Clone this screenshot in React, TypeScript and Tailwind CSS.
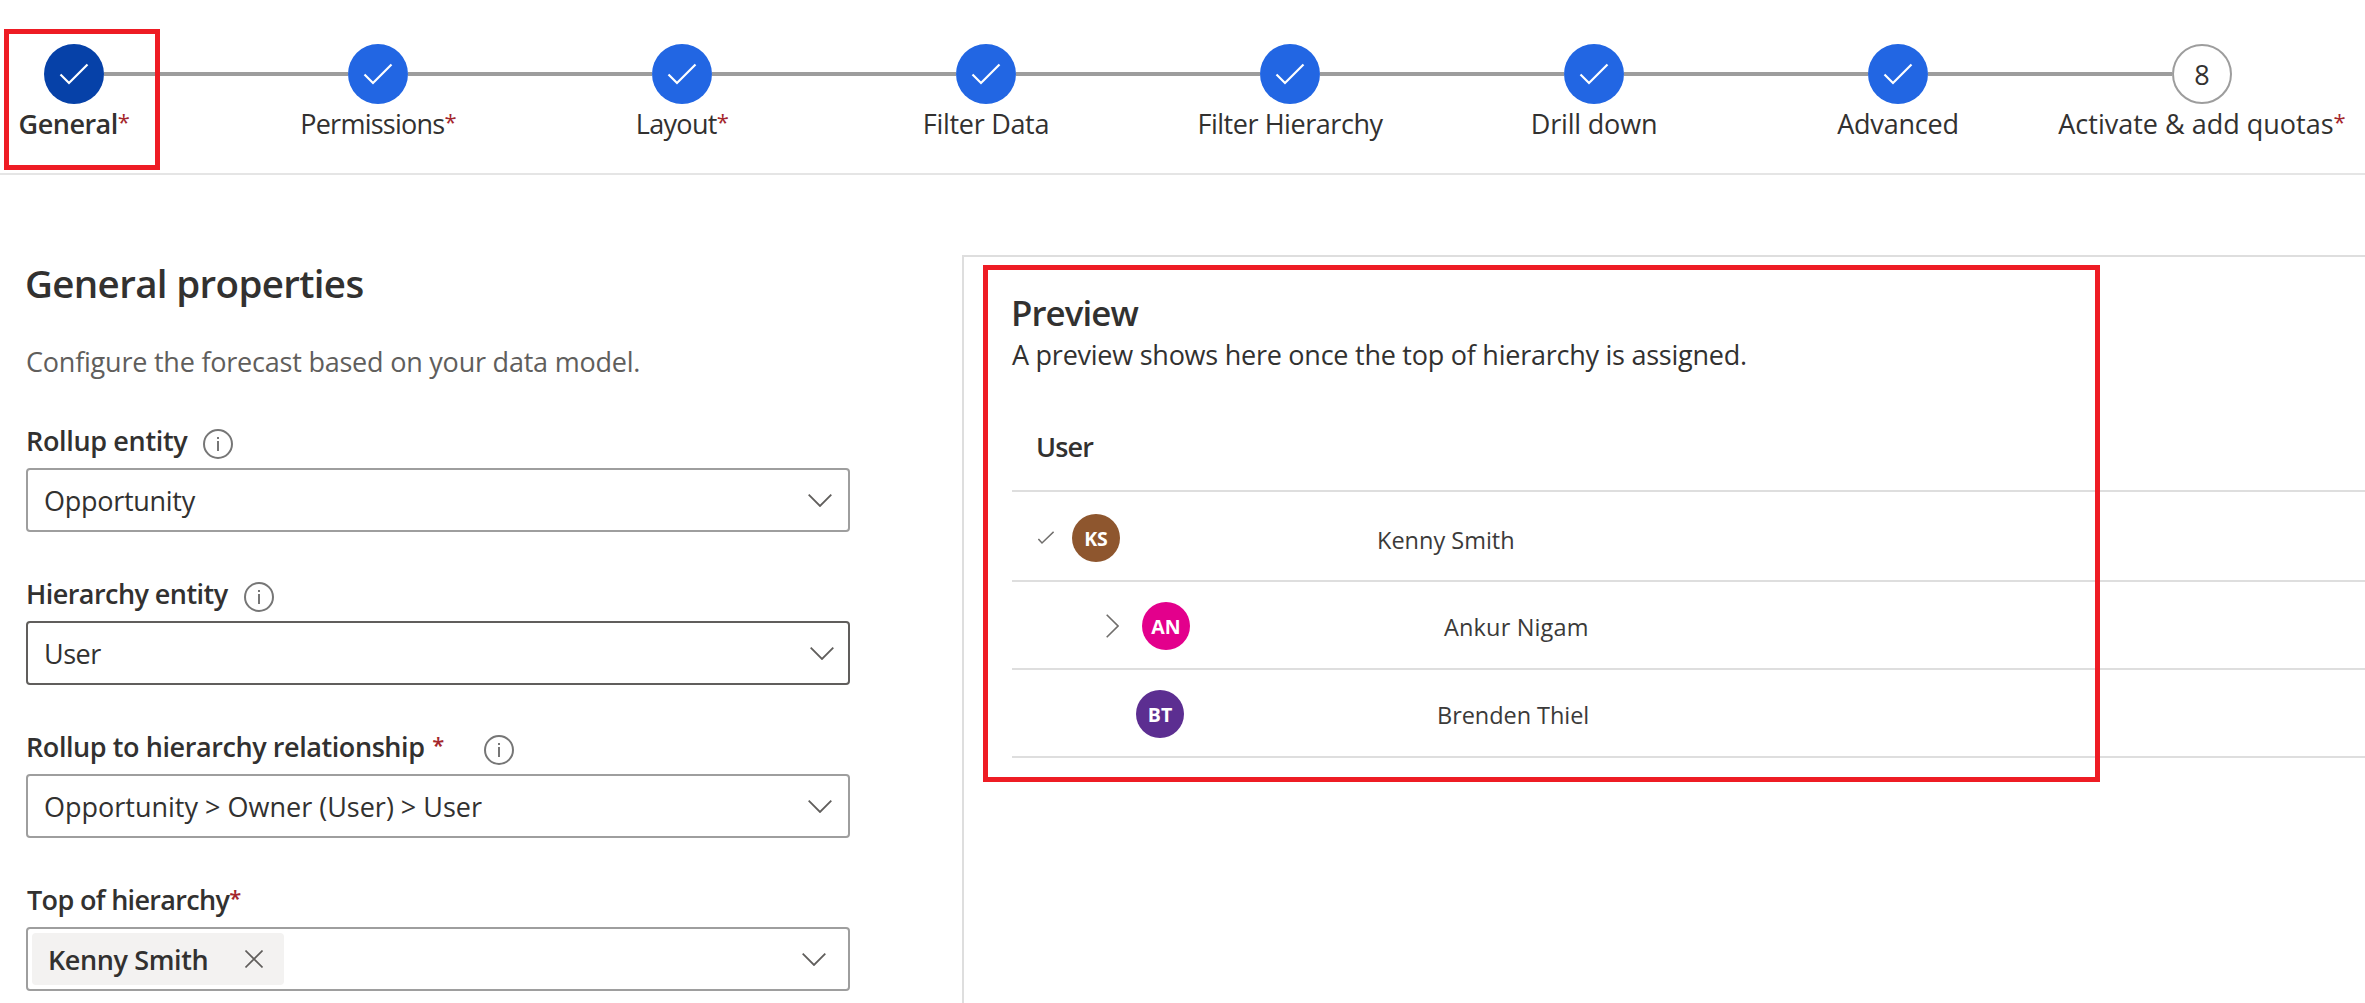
import type { ReactNode } from "react";

const regular = "text-[27px]";
const semibold = "text-[27px] font-semibold";

type Step = { label: string; required?: boolean; spacing: string };

const steps: Step[] = [
  { label: "General", required: true, spacing: "tracking-[-0.5px]" },
  { label: "Permissions", required: true, spacing: "tracking-[-0.75px]" },
  { label: "Layout", required: true, spacing: "tracking-[-0.65px]" },
  { label: "Filter Data", spacing: "tracking-[-0.3px]" },
  { label: "Filter Hierarchy", spacing: "tracking-[-0.45px]" },
  { label: "Drill down", spacing: "tracking-[-0.18px]" },
  { label: "Advanced", spacing: "tracking-[-0.2px]" },
  { label: "Activate & add quotas", required: true, spacing: "" },
];

function Required({ className = "" }: { className?: string }) {
  return <span className={`align-[4px] text-[22px] leading-none text-[#a4262c] ${className}`}>*</span>;
}

function Stepper() {
  return (
    <header className="relative h-[175px] overflow-hidden border-b-2 border-[#e5e5e5] pt-11">
      <div className="-ml-[78px] flex">
        {steps.map((step, i) => {
          const last = i === steps.length - 1;
          return (
            <div key={step.label} className="w-[304px] shrink-0">
              <div className="flex h-[60px] items-center">
                <div className={`h-1 flex-1 ${i === 0 ? "" : "bg-[#9d9d9d]"}`} />
                {last ? (
                  <div className="flex size-[60px] items-center justify-center rounded-full border-2 border-[#9d9d9d] pt-[3px] text-[27px]">
                    8
                  </div>
                ) : (
                  <div className={`size-[60px] rounded-full ${i === 0 ? "bg-[#0641a8]" : "bg-[#2266e3]"}`}>
                    <svg viewBox="0 0 60 60" className="size-full" fill="none" stroke="white" strokeWidth="2.2">
                      <path d="M16.5 30.5 25 39 43.5 20.5" />
                    </svg>
                  </div>
                )}
                <div className={`h-1 flex-1 ${last ? "" : "bg-[#9d9d9d]"}`} />
              </div>
              <div
                className={`text-center leading-10 whitespace-nowrap ${i === 0 ? semibold : regular} ${step.spacing}`}
              >
                {step.label}
                {step.required && <Required className="font-normal" />}
              </div>
            </div>
          );
        })}
      </div>
      <div className="absolute top-[29px] left-1 h-[141px] w-[156px] border-[5px] border-[#ee1c24]" />
    </header>
  );
}

function InfoIcon({ className }: { className: string }) {
  return (
    <svg
      viewBox="0 0 30 30"
      className={`mt-2 size-[30px] shrink-0 ${className}`}
      fill="none"
      stroke="#767676"
      strokeWidth="2"
    >
      <circle cx="15" cy="15" r="14" />
      <path d="M15 12v10M15 8v2" />
    </svg>
  );
}

function Field({
  label,
  info,
  border = "border-[#9e9e9e]",
  chevron,
  children,
}: {
  label: ReactNode;
  info?: string;
  border?: string;
  chevron: string;
  children: ReactNode;
}) {
  return (
    <div>
      <div className={`flex h-12 items-start pt-px leading-10 whitespace-nowrap ${semibold}`}>
        {label}
        {info && <InfoIcon className={info} />}
      </div>
      <div className={`flex h-16 items-center rounded-[4px] border-2 ${border}`}>
        {children}
        <svg
          viewBox="0 0 24 13"
          className={`ml-auto h-[13px] w-6 ${chevron}`}
          fill="none"
          stroke="#605e5c"
          strokeWidth="1.8"
        >
          <path d="M.7.7 12 12 23.3.7" />
        </svg>
      </div>
    </div>
  );
}

function Row({
  className,
  icon,
  avatar,
  initials,
  name,
  nameClass,
}: {
  className: string;
  icon?: ReactNode;
  avatar: string;
  initials: string;
  name: string;
  nameClass: string;
}) {
  return (
    <div className={`flex border-b-2 border-[#dedede] ${className}`}>
      {icon}
      <div
        className={`flex size-12 shrink-0 items-center justify-center rounded-full pt-0.5 text-[19.5px] font-bold text-white ${avatar}`}
      >
        {initials}
      </div>
      <div className={`text-[23.5px] leading-[48px] whitespace-nowrap text-[#3b3a39] ${nameClass}`}>{name}</div>
    </div>
  );
}

export default function App() {
  return (
    <div className="flex h-[1003px] w-[2365px] flex-col overflow-hidden bg-white font-['Open_Sans','Noto_Sans',sans-serif] text-[#323130]">
      <Stepper />
      <main className="flex flex-1">
        <section className="w-[962px] shrink-0 pt-[82px] pr-28 pl-[26px]">
          <h1 className="-ml-px text-[38.5px] leading-[53px] font-semibold tracking-[-0.65px]">
            General properties
          </h1>
          <p className={`mt-8 leading-10 tracking-[-0.22px] text-[#605e5c] ${regular}`}>
            Configure the forecast based on your data model.
          </p>
          <div className="mt-[38px] flex flex-col gap-[41px]">
            <Field
              label={<span className="tracking-[-0.34px]">Rollup entity</span>}
              info="ml-4"
              chevron="mr-4"
            >
              <span className={`pt-0.5 pl-4 tracking-[-0.28px] ${regular}`}>Opportunity</span>
            </Field>
            <Field
              label={<span className="tracking-[-0.55px]">Hierarchy entity</span>}
              info="ml-4"
              border="border-[#605e5c]"
              chevron="mr-[14px]"
            >
              <span className={`pt-0.5 pl-4 tracking-[-0.5px] ${regular}`}>User</span>
            </Field>
            <Field
              label={
                <span className="tracking-[-0.42px]">
                  Rollup to hierarchy relationship <Required className="ml-px" />
                </span>
              }
              info="ml-10"
              chevron="mr-4"
            >
              <span className={`pt-0.5 pl-4 ${regular}`}>Opportunity &gt; Owner (User) &gt; User</span>
            </Field>
            <Field
              label={
                <span className="ml-px tracking-[-0.67px]">
                  Top of hierarchy
                  <Required />
                </span>
              }
              chevron="mr-[22px]"
            >
              <div className="ml-1 flex h-[52px] w-[252px] items-center justify-between rounded-[4px] bg-[#f3f2f1] pr-[21px] pl-4">
                <span className={`pt-0.5 tracking-[-0.39px] ${semibold}`}>Kenny Smith</span>
                <svg viewBox="0 0 18 18" className="size-[18px]" stroke="#605e5c" strokeWidth="1.6">
                  <path d="M.5.5l17 17M17.5.5l-17 17" />
                </svg>
              </div>
            </Field>
          </div>
        </section>

        <section className="relative mt-20 flex-1 border-t-2 border-l-2 border-[#dedede] pt-8 pl-12">
          <h2 className="-ml-px text-[34.8px] leading-[47px] font-semibold tracking-[-0.9px]">Preview</h2>
          <p className={`leading-[38px] tracking-[-0.25px] ${regular}`}>
            A preview shows here once the top of hierarchy is assigned.
          </p>
          <div className={`mt-[53px] h-[65px] border-b-2 border-[#dedede] pl-6 leading-10 tracking-[-0.8px] ${semibold}`}>
            User
          </div>
          <Row
            className="h-[90px] pt-[22px] pl-[26px]"
            icon={
              <svg
                viewBox="0 0 16 14"
                className="mt-[17px] mr-[18px] h-3.5 w-4 shrink-0"
                fill="none"
                stroke="#706e6c"
                strokeWidth="1.5"
              >
                <path d="M.4 8 4 12 15.6.8" />
              </svg>
            }
            avatar="bg-[#8e562e]"
            initials="KS"
            name="Kenny Smith"
            nameClass="mt-0.5 ml-[257px]"
          />
          <Row
            className="h-[88px] pt-5 pl-[94px]"
            icon={
              <svg
                viewBox="0 0 13 24"
                className="mt-3 mr-[23px] h-6 w-[13px] shrink-0"
                fill="none"
                stroke="#706e6c"
                strokeWidth="1.6"
              >
                <path d="M.7.7 12 12 .7 23.3" />
              </svg>
            }
            avatar="bg-[#e3008c]"
            initials="AN"
            name="Ankur Nigam"
            nameClass="mt-px ml-[254px] tracking-[0.15px]"
          />
          <Row
            className="h-[88px] pt-5 pl-[124px]"
            avatar="bg-[#5c2e91]"
            initials="BT"
            name="Brenden Thiel"
            nameClass="mt-px ml-[253px] tracking-[-0.05px]"
          />
          <div className="absolute top-2 left-[19px] h-[517px] w-[1117px] border-[5px] border-[#ee1c24]" />
        </section>
      </main>
    </div>
  );
}
